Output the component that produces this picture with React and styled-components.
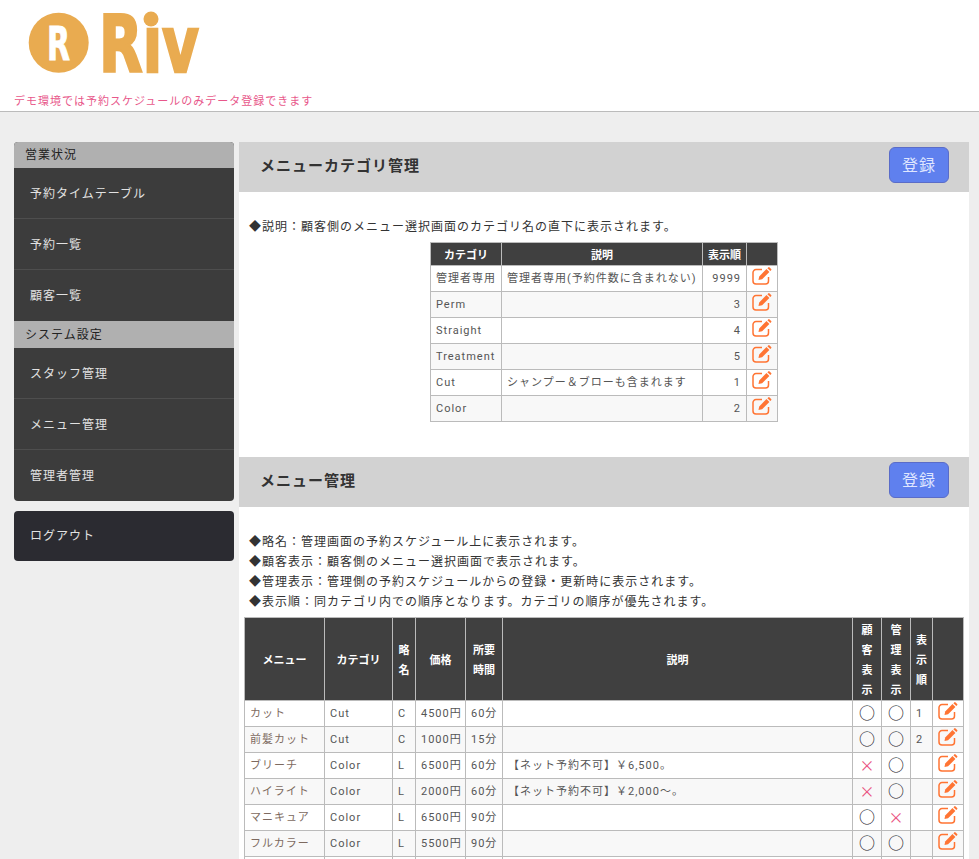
import React from "react";
import styled, { createGlobalStyle } from "styled-components";

const categories = [
  ["管理者専用", "管理者専用(予約件数に含まれない)", "9999"],
  ["Perm", "", "3"],
  ["Straight", "", "4"],
  ["Treatment", "", "5"],
  ["Cut", "シャンプー＆ブローも含まれます", "1"],
  ["Color", "", "2"],
];

const menus = [
  ["カット", "Cut", "C", "4500円", "60分", "", true, true, "1"],
  ["前髪カット", "Cut", "C", "1000円", "15分", "", true, true, "2"],
  ["ブリーチ", "Color", "L", "6500円", "60分", "【ネット予約不可】￥6,500。", false, true, ""],
  ["ハイライト", "Color", "L", "2000円", "60分", "【ネット予約不可】￥2,000～。", false, true, ""],
  ["マニキュア", "Color", "L", "6500円", "90分", "", true, false, ""],
  ["フルカラー", "Color", "L", "5500円", "90分", "", true, true, ""],
  ["", "", "", "", "", "", null, null, ""],
];

const notes = [
  "◆略名：管理画面の予約スケジュール上に表示されます。",
  "◆顧客表示：顧客側のメニュー選択画面で表示されます。",
  "◆管理表示：管理側の予約スケジュールからの登録・更新時に表示されます。",
  "◆表示順：同カテゴリ内での順序となります。カテゴリの順序が優先されます。",
];

function Logo() {
  return (
    <LogoSvg viewBox="0 0 210 90">
      <circle cx="58.7" cy="42.7" r="30" fill="#e9ab50" />
      <LogoLetter x="47" y="60" textLength="23" fontSize="47" fill="#fff" stroke="#fff" strokeWidth="1">R</LogoLetter>
      <circle cx="151" cy="19" r="7.5" fill="#e9ab50" />
      <LogoLetter x="99" y="72" textLength="100" fontSize="79" fill="#e9ab50" stroke="#e9ab50" strokeWidth="2.5">Rıv</LogoLetter>
    </LogoSvg>
  );
}

function EditIcon() {
  return (
    <EditSvg viewBox="0 0 20 18">
      <path
        d="M10 2.6H4A3 3 0 0 0 1 5.6v8.4a3 3 0 0 0 3 3h9.5a3 3 0 0 0 3-3V10"
        fill="none"
        stroke="currentColor"
        strokeWidth="1.5"
      />
      <path d="M6.5 13l.7-3.6 7.3-7.3 2.9 2.9-7.3 7.3z" fill="currentColor" />
      <path d="M15.4 1.2l.8-.8a1 1 0 0 1 1.4 0l1.5 1.5a1 1 0 0 1 0 1.4l-.8.8z" fill="currentColor" />
    </EditSvg>
  );
}

function Mark({ ok }) {
  if (ok === null) return null;
  return ok ? <Circle>○</Circle> : <Cross>×</Cross>;
}

export default function App() {
  return (
    <Page>
      <GlobalStyle />
      <Header>
        <Logo />
        <Notice>デモ環境では予約スケジュールのみデータ登録できます</Notice>
      </Header>
      <Body>
        <Side>
          <Nav>
            <NavTitle>営業状況</NavTitle>
            <NavItem>予約タイムテーブル</NavItem>
            <NavItem>予約一覧</NavItem>
            <NavItem $last>顧客一覧</NavItem>
            <NavTitle $tall>システム設定</NavTitle>
            <NavItem>スタッフ管理</NavItem>
            <NavItem>メニュー管理</NavItem>
            <NavItem $last>管理者管理</NavItem>
          </Nav>
          <Logout>ログアウト</Logout>
        </Side>
        <Main>
          <SectionHead>
            <SectionTitle>メニューカテゴリ管理</SectionTitle>
            <AddButton>登録</AddButton>
          </SectionHead>
          <SectionBody>
            <Note>◆説明：顧客側のメニュー選択画面のカテゴリ名の直下に表示されます。</Note>
            <CategoryTable>
              <thead>
                <tr>
                  <Th $w={71}>カテゴリ</Th>
                  <Th $w={201}>説明</Th>
                  <Th $w={44}>表示順</Th>
                  <Th $w={31} />
                </tr>
              </thead>
              <tbody>
                {categories.map((c) => (
                  <Row key={c[0]}>
                    <Td>{c[0]}</Td>
                    <Td>{c[1]}</Td>
                    <Td $align="right">{c[2]}</Td>
                    <IconCell><EditIcon /></IconCell>
                  </Row>
                ))}
              </tbody>
            </CategoryTable>
          </SectionBody>
          <SectionHead>
            <SectionTitle>メニュー管理</SectionTitle>
            <AddButton>登録</AddButton>
          </SectionHead>
          <SectionBody>
            {notes.map((n) => (
              <Note key={n}>{n}</Note>
            ))}
            <MenuTable>
              <thead>
                <tr>
                  <Th $w={80}>メニュー</Th>
                  <Th $w={68}>カテゴリ</Th>
                  <Th $w={23}>略<br />名</Th>
                  <Th $w={50}>価格</Th>
                  <Th $w={37}>所要<br />時間</Th>
                  <Th $w={350}>説明</Th>
                  <Th $w={29}>顧<br />客<br />表<br />示</Th>
                  <Th $w={29}>管<br />理<br />表<br />示</Th>
                  <Th $w={22}>表<br />示<br />順</Th>
                  <Th $w={31} />
                </tr>
              </thead>
              <tbody>
                {menus.map((m, i) => (
                  <Row key={i}>
                    <NameCell>{m[0]}</NameCell>
                    <Td>{m[1]}</Td>
                    <Td>{m[2]}</Td>
                    <Td>{m[3]}</Td>
                    <Td>{m[4]}</Td>
                    <Td>{m[5]}</Td>
                    <MarkCell><Mark ok={m[6]} /></MarkCell>
                    <MarkCell><Mark ok={m[7]} /></MarkCell>
                    <Td>{m[8]}</Td>
                    <IconCell>{m[0] && <EditIcon />}</IconCell>
                  </Row>
                ))}
              </tbody>
            </MenuTable>
          </SectionBody>
        </Main>
      </Body>
    </Page>
  );
}

// STYLES

const GlobalStyle = createGlobalStyle`
  html, body {
    margin: 0;
    padding: 0;
    background: #eeeeee;
  }
  body {
    font-family: "Noto Sans CJK JP", "Noto Sans", sans-serif;
    font-size: 12px;
    letter-spacing: 1px;
    color: #333;
  }
`;

const Page = styled.div`
  height: 100vh;
  overflow: hidden;
`;

const Header = styled.header`
  height: 111px;
  background: #fff;
  border-bottom: 1px solid #bbb;
`;

const LogoSvg = styled.svg`
  display: block;
  width: 210px;
  height: 90px;
`;

const LogoLetter = styled.text.attrs({ lengthAdjust: "spacingAndGlyphs" })`
  font-family: "DejaVu Sans", sans-serif;
  font-weight: 700;
  letter-spacing: 0;
`;

const Notice = styled.div`
  padding-left: 14px;
  font-size: 11px;
  line-height: 21px;
  color: #e8578a;
`;

const Body = styled.div`
  display: flex;
  align-items: flex-start;
  gap: 5px;
  padding: 30px 10px 0 14px;
`;

const Side = styled.aside`
  flex: 0 0 220px;
  display: flex;
  flex-direction: column;
  gap: 10px;
`;

const Nav = styled.nav`
  background: #3c3c3c;
  border-radius: 4px;
  overflow: hidden;
`;

const NavTitle = styled.div`
  height: ${(p) => (p.$tall ? 27 : 26)}px;
  line-height: ${(p) => (p.$tall ? 26 : 24)}px;
  padding-left: 11px;
  background: #b0b0b0;
  color: #222;
`;

const NavItem = styled.div`
  height: 51px;
  box-sizing: border-box;
  line-height: 50px;
  padding-left: 16px;
  color: #e2e2e2;
  border-bottom: ${(p) => (p.$last ? "none" : "1px solid #4e4e4e")};
`;

const Logout = styled.div`
  height: 50px;
  line-height: 47px;
  padding-left: 16px;
  background: #2b2b31;
  border-radius: 4px;
  color: #e2e2e2;
`;

const Main = styled.main`
  flex: 1;
  min-width: 0;
`;

const SectionHead = styled.div`
  height: 50px;
  box-sizing: border-box;
  display: flex;
  align-items: center;
  justify-content: space-between;
  padding: 0 20px 4px 21px;
  background: #d2d2d2;
`;

const SectionTitle = styled.h2`
  margin: 0 0 2px;
  font-size: 15px;
  font-weight: 700;
  color: #333;
`;

const AddButton = styled.button`
  width: 60px;
  height: 36px;
  padding: 0 0 2px;
  border: 1px solid #5a6cc8;
  border-radius: 6px;
  background: #5f80ee;
  color: #dfe6ff;
  font: inherit;
  font-size: 16px;
  letter-spacing: 1px;
`;

const SectionBody = styled.section`
  padding: 24px 5px 35px;
  background: #fff;
`;

const Note = styled.p`
  margin: 0;
  padding-left: 5px;
  line-height: 20px;
  color: #333;
`;

const BaseTable = styled.table`
  border-collapse: collapse;
  table-layout: fixed;
  margin: 6px auto 0;
  border: 1px solid #bbb;
`;

const CategoryTable = styled(BaseTable)`
  width: 347px;
`;

const MenuTable = styled(BaseTable)`
  width: 719px;
`;

const Th = styled.th`
  width: ${(p) => p.$w}px;
  padding: 1px 0;
  box-sizing: border-box;
  height: 23px;
  border: 1px solid #bbb;
  background: #404040;
  color: #fff;
  font-size: 11px;
  line-height: 20px;
  font-weight: 700;
  letter-spacing: 0;
  text-align: center;
`;

const Row = styled.tr`
  height: 26px;
  &:nth-child(even) {
    background: #f8f8f8;
  }
`;

const Td = styled.td`
  padding: 0 5px;
  border: 1px solid #bbb;
  color: #555;
  font-family: Roboto, "Noto Sans CJK JP", sans-serif;
  font-size: 11px;
  line-height: 23px;
  white-space: nowrap;
  text-align: ${(p) => p.$align || "left"};
`;

const NameCell = styled(Td)`
  color: #7d6a60;
`;

const MarkCell = styled(Td)`
  padding: 0;
  text-align: center;
`;

const IconCell = styled(Td)`
  padding: 0;
  vertical-align: top;
`;

const EditSvg = styled.svg`
  display: block;
  width: 20px;
  height: 18px;
  margin: 1px 0 0 5px;
  color: #ff7433;
`;

const Circle = styled.span`
  display: block;
  height: 23px;
  font-family: "Noto Sans CJK JP", sans-serif;
  font-size: 16px;
  line-height: 21px;
  letter-spacing: 0;
  color: #112;
`;

const Cross = styled.span`
  display: block;
  height: 23px;
  font-family: "Noto Sans CJK JP", sans-serif;
  font-size: 15px;
  line-height: 21px;
  letter-spacing: 0;
  color: #ea4f7e;
`;
